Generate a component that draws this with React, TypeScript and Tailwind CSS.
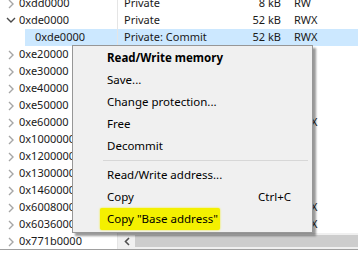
type Row = {
  name: string;
  type: string;
  size: string;
  prot: string;
  state?: "open" | "closed";
  child?: boolean;
  selected?: boolean;
};

const rows: Row[] = [
  { name: "0xdd0000", type: "Private", size: "8 kB", prot: "RW", state: "closed" },
  { name: "0xde0000", type: "Private", size: "52 kB", prot: "RWX", state: "open" },
  { name: "0xde0000", type: "Private: Commit", size: "52 kB", prot: "RWX", child: true, selected: true },
  { name: "0xe20000", type: "Mapped", size: "12 kB", prot: "R", state: "closed" },
  { name: "0xe30000", type: "Mapped", size: "16 kB", prot: "R", state: "closed" },
  { name: "0xe40000", type: "Mapped", size: "260 kB", prot: "R", state: "closed" },
  { name: "0xe50000", type: "Mapped", size: "8 kB", prot: "R", state: "closed" },
  { name: "0xe60000", type: "Private", size: "16 kB", prot: "RWX", state: "closed" },
  { name: "0x1000000", type: "Private", size: "1,024 kB", prot: "R", state: "closed" },
  { name: "0x1200000", type: "Private", size: "64 kB", prot: "R", state: "closed" },
  { name: "0x1300000", type: "Mapped", size: "52 kB", prot: "R", state: "closed" },
  { name: "0x1460000", type: "Private", size: "16 kB", prot: "R", state: "closed" },
  { name: "0x6008000", type: "Private", size: "12 kB", prot: "RWX", state: "closed" },
  { name: "0x6036000", type: "Private", size: "24 kB", prot: "RWX", state: "closed" },
  { name: "0x771b0000", type: "Image", size: "1,716 kB", prot: "WCX", state: "closed" },
];

function Chevron({ open }: { open?: boolean }) {
  if (open) {
    return (
      <svg width="10" height="7" viewBox="0 0 10 7" className="block">
        <polyline points="1,1 5,5 9,1" fill="none" stroke="#4a4a4a" strokeWidth="1.4" />
      </svg>
    );
  }
  return (
    <svg width="6" height="10" viewBox="0 0 6 10" className="block">
      <polyline points="1,1 5,5 1,9" fill="none" stroke="#a6a6a6" strokeWidth="1.4" />
    </svg>
  );
}

function MenuItem({ label, shortcut, bold, marked }: { label: string; shortcut?: string; bold?: boolean; marked?: boolean }) {
  return (
    <div className="h-[22px] flex items-center justify-between pl-[34px] pr-[21px]">
      <span
        className={
          (bold ? "font-bold " : "") +
          (marked ? "bg-[#f4f000] -ml-[7px] pl-[7px] pr-[2px] py-[2px] rounded-[2px] shadow-[0_0_2px_#f4f000]" : "")
        }
      >
        {label}
      </span>
      {shortcut && <span>{shortcut}</span>}
    </div>
  );
}

export default function App() {
  return (
    <div className="relative w-[358px] h-[259px] overflow-hidden bg-white text-[11px] text-[#1a1a1a] font-['Noto_Sans',sans-serif]">
      <div className="h-[250px] border-b border-[#a0a0a0] flex overflow-hidden">
        <div className="w-[118px] border-r border-[#e5e5e5] mt-[-5px] shrink-0">
          {rows.map((r, i) => (
            <div key={i} className="h-[17px] flex items-center whitespace-nowrap">
              {r.child ? (
                <div className={"ml-[25px] flex-1 h-full flex items-center pl-[10px] " + (r.selected ? "bg-[#cce8ff]" : "")}>
                  {r.name}
                </div>
              ) : (
                <>
                  <div className={"w-[19px] flex items-center " + (r.state === "open" ? "pl-[6px]" : "pl-[8px]")}>
                    <Chevron open={r.state === "open"} />
                  </div>
                  <span>{r.name}</span>
                </>
              )}
            </div>
          ))}
        </div>
        <div className="flex-1 flex flex-col">
          <div className="mt-[-5px]">
            {rows.slice(0, 14).map((r, i) => (
              <div key={i} className={"h-[17px] flex items-center whitespace-nowrap " + (r.selected ? "bg-[#cce8ff]" : "")}>
                <div className="w-[110px] pl-[6px] overflow-hidden">{r.type}</div>
                <div className="w-[60px] pr-[7px] text-right">{r.size}</div>
                <div className="pl-[6px]">{r.prot}</div>
              </div>
            ))}
          </div>
          <div className="h-[16px] flex items-center bg-[#f0f0f0]">
            <div className="w-[17px] h-full flex items-center justify-center">
              <svg width="6" height="9" viewBox="0 0 6 9" className="block">
                <polyline points="5,1 1.5,4.5 5,8" fill="none" stroke="#505050" strokeWidth="1.6" />
              </svg>
            </div>
            <div className="flex-1 h-[12px] bg-[#cdcdcd]" />
          </div>
        </div>
      </div>

      <div className="absolute left-[72px] top-[45px] w-[241px] h-[188px] bg-[#f0f0f0] border border-[#979797] pt-[1px] text-[11.5px] text-black shadow-[3px_3px_2px_rgba(0,0,0,0.4)]">
        <MenuItem label="Read/Write memory" bold />
        <MenuItem label="Save..." />
        <MenuItem label="Change protection..." />
        <MenuItem label="Free" />
        <MenuItem label="Decommit" />
        <div className="h-[7px] flex items-center pl-[30px] pr-[4px]">
          <div className="flex-1 h-[1px] bg-[#d7d7d7]" />
        </div>
        <MenuItem label="Read/Write address..." />
        <MenuItem label="Copy" shortcut="Ctrl+C" />
        <MenuItem label={'Copy "Base address"'} marked />
      </div>
    </div>
  );
}
